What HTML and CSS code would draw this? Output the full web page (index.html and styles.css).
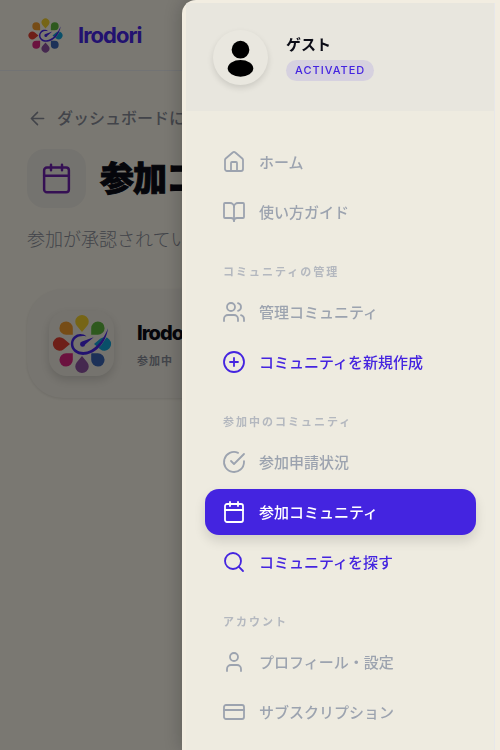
FILE: index.html
```html
<!DOCTYPE html>
<html lang="ja">
<head>
  <meta charset="UTF-8">
  <meta name="viewport" content="width=device-width, initial-scale=1.0">
  <title>Irodori</title>
  <link rel="stylesheet" href="styles.css">
</head>
<body>
  <!-- Shared logo -->
  <svg class="sprite" aria-hidden="true">
    <symbol id="logo" viewBox="0 0 60 60">
      <g id="petals">
        <path fill="#ecca2c" d="M30 18 L24.8 11.8 A6.7 6.7 0 1 1 35.2 11.8 Z"/>
        <path fill="#5cb23c" transform="rotate(45 30 30)" d="M30 17 L25.3 12.3 A6.7 6.7 0 1 1 34.7 12.3 Z"/>
        <path fill="#129fd2" transform="rotate(90 30 30)" d="M30 18 L24.8 11.8 A6.7 6.7 0 1 1 35.2 11.8 Z"/>
        <path fill="#3a62b0" transform="rotate(135 30 30)" d="M30 17 L25.3 12.3 A6.7 6.7 0 1 1 34.7 12.3 Z"/>
        <path fill="#8a519f" transform="rotate(180 30 30)" d="M30 18 L24.8 11.8 A6.7 6.7 0 1 1 35.2 11.8 Z"/>
        <path fill="#d6247e" transform="rotate(225 30 30)" d="M30 17 L25.3 12.3 A6.7 6.7 0 1 1 34.7 12.3 Z"/>
        <path fill="#dc3f30" transform="rotate(270 30 30)" d="M30 18 L24.8 11.8 A6.7 6.7 0 1 1 35.2 11.8 Z"/>
        <path fill="#ec982c" transform="rotate(315 30 30)" d="M30 17 L25.3 12.3 A6.7 6.7 0 1 1 34.7 12.3 Z"/>
      </g>
      <path fill="none" stroke="#ebe7dd" stroke-width="2" d="M37 39.5 C46 35.5 53 26 56.5 16"/>
      <path fill="#4424e0" d="M34.5 22.5 C31 19.2 25.5 19.3 22 22.5 C18.5 25.7 17.8 31.5 20.5 35.5 C23.2 39.8 28 41.3 33 40.8 C44 39.5 54 29 56 14.3 C51.5 26 42 38 31.5 38 C26 38 21.3 35 21.3 29.8 C21.3 24.5 27 20.8 34.5 22.5 Z"/>
      <path fill="#4424e0" d="M41.7 23.3 L33.2 30.5 A2.6 2.6 0 1 1 30 27.6 Z"/>
    </symbol>
    <symbol id="calendar" viewBox="0 0 24 24">
      <path d="M8 2v4M16 2v4M3 10h18"/>
      <rect x="3" y="4" width="18" height="18" rx="2"/>
    </symbol>
  </svg>

  <!-- Page -->
  <header class="site-header">
    <a href="#" class="brand">
      <svg class="brand-logo"><use href="#logo"/></svg>
      <span>Irodori</span>
    </a>
  </header>

  <main class="page">
    <a href="#" class="back-link">
      <svg class="line-icon" viewBox="0 0 24 24"><path d="m12 19-7-7 7-7M19 12H5"/></svg>
      <span>ダッシュボードに戻る</span>
    </a>
    <div class="page-title">
      <div class="title-icon"><svg class="line-icon"><use href="#calendar"/></svg></div>
      <h1>参加コミュニティ</h1>
    </div>
    <p class="lead">参加が承認されているコミュニティの一覧です。</p>

    <a href="#" class="community-card">
      <div class="community-logo"><svg><use href="#logo"/></svg></div>
      <div>
        <h2>Irodori</h2>
        <p>参加中</p>
      </div>
    </a>
  </main>

  <div class="overlay"></div>

  <!-- Drawer -->
  <aside class="drawer">
    <div class="drawer-inner">
      <div class="profile">
        <div class="avatar">
          <svg viewBox="0 0 56 56"><circle cx="28" cy="20" r="9"/><ellipse cx="28" cy="39" rx="13" ry="8.5"/></svg>
        </div>
        <div>
          <p class="profile-name">ゲスト</p>
          <span class="badge">ACTIVATED</span>
        </div>
      </div>

      <nav class="menu">
        <a href="#" class="menu-item">
          <svg class="line-icon" viewBox="0 0 24 24"><path d="M15 21v-8a1 1 0 0 0-1-1h-4a1 1 0 0 0-1 1v8"/><path d="M3 10a2 2 0 0 1 .709-1.528l7-6a2 2 0 0 1 2.582 0l7 6A2 2 0 0 1 21 10v9a2 2 0 0 1-2 2H5a2 2 0 0 1-2-2z"/></svg>
          <span>ホーム</span>
        </a>
        <a href="#" class="menu-item">
          <svg class="line-icon" viewBox="0 0 24 24"><path d="M12 7v14"/><path d="M3 18a1 1 0 0 1-1-1V4a1 1 0 0 1 1-1h5a4 4 0 0 1 4 4 4 4 0 0 1 4-4h5a1 1 0 0 1 1 1v13a1 1 0 0 1-1 1h-6a3 3 0 0 0-3 3 3 3 0 0 0-3-3z"/></svg>
          <span>使い方ガイド</span>
        </a>

        <h3 class="menu-label">コミュニティの管理</h3>
        <a href="#" class="menu-item">
          <svg class="line-icon" viewBox="0 0 24 24"><path d="M16 21v-2a4 4 0 0 0-4-4H6a4 4 0 0 0-4 4v2"/><circle cx="9" cy="7" r="4"/><path d="M22 21v-2a4 4 0 0 0-3-3.87M16 3.13a4 4 0 0 1 0 7.75"/></svg>
          <span>管理コミュニティ</span>
        </a>
        <a href="#" class="menu-item accent">
          <svg class="line-icon" viewBox="0 0 24 24"><circle cx="12" cy="12" r="10"/><path d="M8 12h8M12 8v8"/></svg>
          <span>コミュニティを新規作成</span>
        </a>

        <h3 class="menu-label">参加中のコミュニティ</h3>
        <a href="#" class="menu-item">
          <svg class="line-icon" viewBox="0 0 24 24"><path d="M22 11.08V12a10 10 0 1 1-5.93-9.14"/><path d="m9 11 3 3L22 4"/></svg>
          <span>参加申請状況</span>
        </a>
        <a href="#" class="menu-item active">
          <svg class="line-icon"><use href="#calendar"/></svg>
          <span>参加コミュニティ</span>
        </a>
        <a href="#" class="menu-item accent">
          <svg class="line-icon" viewBox="0 0 24 24"><circle cx="11" cy="11" r="8"/><path d="m21 21-4.3-4.3"/></svg>
          <span>コミュニティを探す</span>
        </a>

        <h3 class="menu-label">アカウント</h3>
        <a href="#" class="menu-item">
          <svg class="line-icon" viewBox="0 0 24 24"><path d="M19 21v-2a4 4 0 0 0-4-4H9a4 4 0 0 0-4 4v2"/><circle cx="12" cy="7" r="4"/></svg>
          <span>プロフィール・設定</span>
        </a>
        <a href="#" class="menu-item">
          <svg class="line-icon" viewBox="0 0 24 24"><rect x="2" y="5" width="20" height="14" rx="2"/><path d="M2 10h20"/></svg>
          <span>サブスクリプション</span>
        </a>
      </nav>
    </div>
  </aside>
</body>
</html>
```
FILE: styles.css
```css
* {
  margin: 0;
  padding: 0;
  box-sizing: border-box;
}

body {
  font-family: Inter, "Noto Sans CJK JP", sans-serif;
  background: #f5f1e5;
  color: #0b0c16;
  min-height: 100vh;
  overflow: hidden;
}

a {
  color: inherit;
  text-decoration: none;
}

.sprite {
  position: absolute;
  width: 0;
  height: 0;
}

.line-icon {
  flex-shrink: 0;
  width: 24px;
  height: 24px;
  fill: none;
  stroke: currentColor;
  stroke-width: 1.8;
  stroke-linecap: round;
  stroke-linejoin: round;
}

/* Header */
.site-header {
  height: 71px;
  padding: 0 28px;
  display: flex;
  align-items: center;
  border-bottom: 1px solid #e4e6e8;
}

.brand {
  display: flex;
  align-items: center;
  gap: 15px;
  color: #4424e0;
  font-size: 22px;
  font-weight: 700;
  letter-spacing: -1px;
}

.brand-logo {
  width: 35px;
  height: 35px;
}

/* Page */
.page {
  padding: 35px 27px;
}

.back-link {
  display: flex;
  align-items: center;
  gap: 9px;
  color: #858994;
  font-size: 16px;
  font-weight: 500;
  line-height: 24px;
  white-space: nowrap;
}

.back-link .line-icon {
  width: 21px;
  height: 21px;
}

.page-title {
  display: flex;
  align-items: center;
  gap: 14px;
  margin-top: 19px;
}

.title-icon {
  flex-shrink: 0;
  display: flex;
  align-items: center;
  justify-content: center;
  width: 59px;
  height: 59px;
  border-radius: 18px;
  background: #e9e6de;
  color: #6b21a8;
}

.title-icon .line-icon {
  width: 33px;
  height: 33px;
}

.page-title h1 {
  font-size: 34px;
  font-weight: 900;
  line-height: 42px;
  letter-spacing: -1px;
  white-space: nowrap;
  -webkit-text-stroke: 1px currentColor;
}

.lead {
  margin-top: 18px;
  color: #858994;
  font-size: 18px;
  font-weight: 300;
  line-height: 28px;
  white-space: nowrap;
}

.community-card {
  display: flex;
  align-items: center;
  gap: 23px;
  margin-top: 35px;
  padding: 22px;
  border-radius: 36px;
  background: #eeeae0;
  box-shadow: 0 1px 3px rgba(0, 0, 0, 0.1);
}

.community-logo {
  display: flex;
  align-items: center;
  justify-content: center;
  width: 65px;
  height: 65px;
  border-radius: 18px;
  background: #ebe7dd;
  box-shadow: 0 4px 8px rgba(0, 0, 0, 0.14);
}

.community-logo svg {
  width: 60px;
  height: 60px;
}

.community-card h2 {
  font-size: 20px;
  font-weight: 800;
  line-height: 28px;
  letter-spacing: -1px;
}

.community-card p {
  margin-top: 6px;
  color: #858994;
  font-size: 11px;
  font-weight: 700;
  line-height: 16px;
  letter-spacing: 1px;
}

/* Overlay */
.overlay {
  position: fixed;
  inset: 0;
  background: rgba(0, 0, 0, 0.5);
}

/* Drawer */
.drawer {
  position: fixed;
  top: 0;
  right: 0;
  bottom: 0;
  width: 318px;
  padding: 3px 5px 0 4px;
  border-radius: 14px 0 0 0;
  background: #f2ede1;
  box-shadow: 0 0 20px rgba(0, 0, 0, 0.25);
  overflow: hidden;
}

.drawer-inner {
  height: 100%;
  border-right: 1px solid #e6e7ea;
  background: #eeebe0;
}

.profile {
  display: flex;
  align-items: center;
  gap: 18px;
  height: 108px;
  padding: 0 27px;
  background: #e8e6de;
}

.avatar {
  width: 55px;
  height: 55px;
  border-radius: 50%;
  background: #e9e7df;
  box-shadow: 0 3px 6px rgba(0, 0, 0, 0.12);
}

.profile-name {
  font-size: 15px;
  font-weight: 700;
  line-height: 24px;
}

.badge {
  display: block;
  margin-top: 3px;
  padding: 0 9px;
  border-radius: 11px;
  background: #d6d1df;
  color: #4424e0;
  font-size: 11px;
  font-weight: 500;
  line-height: 21px;
  letter-spacing: 1px;
}

.menu {
  padding: 28px 18px 0 19px;
}

.menu-item {
  display: flex;
  align-items: center;
  gap: 13px;
  height: 46px;
  margin-bottom: 4px;
  padding: 0 17px;
  border-radius: 14px;
  color: #9ca3af;
  font-size: 15px;
  font-weight: 500;
}

.menu-item span {
  padding-bottom: 2px;
}

.menu-item.accent {
  color: #4424e0;
}

.menu-item.active {
  background: #4424e0;
  color: #ffffff;
  box-shadow: 0 6px 12px rgba(0, 0, 0, 0.12);
}

.menu-label {
  padding: 25px 18px 9px;
  color: #b4b8bf;
  font-size: 11px;
  font-weight: 600;
  line-height: 16px;
  letter-spacing: 2px;
}
```
